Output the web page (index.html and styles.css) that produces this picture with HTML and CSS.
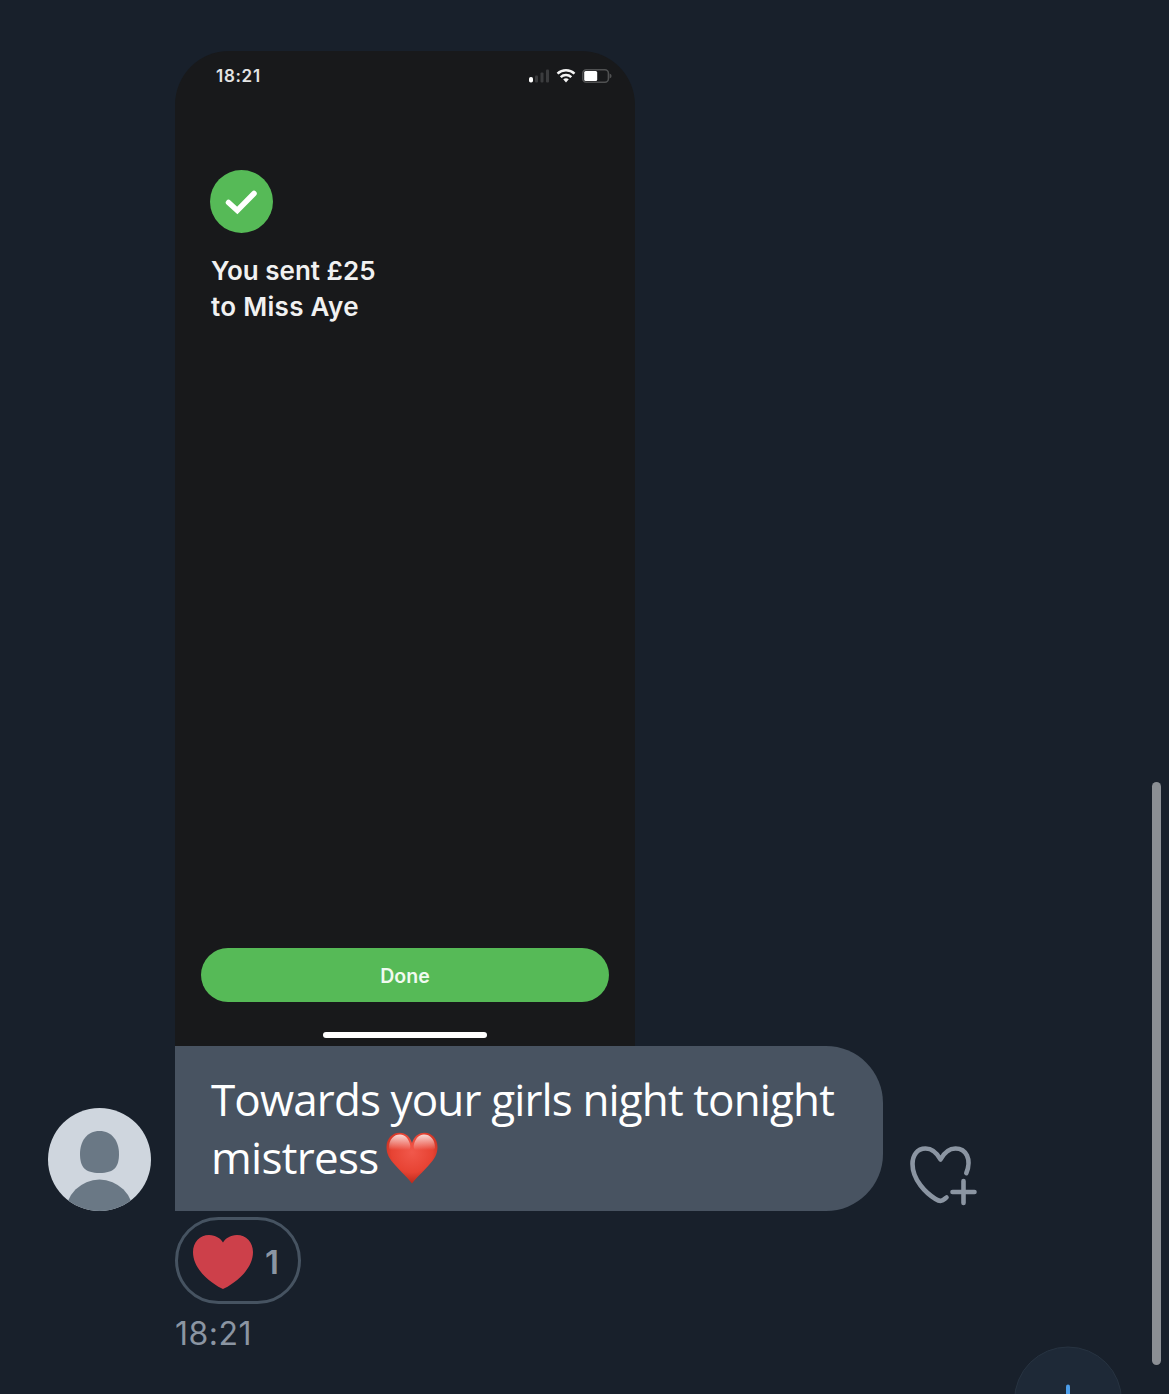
FILE: index.html
```
<!DOCTYPE html>
<html lang="en">
<head>
	<meta charset="utf-8">
	<title>Messages</title>
	<link rel="stylesheet" href="styles.css">
</head>
<body>
	<div class="chat">
		<div class="photo">
			<div class="status">
				<span class="clock">18:21</span>
				<svg class="status-icons" width="84" height="16" viewBox="0 0 84 16">
					<rect x="1" y="9" width="4" height="5.5" rx="1.8" fill="#fff"/>
					<g fill="#3b3c3e">
						<rect x="7" y="7.5" width="3" height="7" rx="1"/>
						<rect x="12.500" y="4.500" width="3" height="10" rx="1"/>
						<rect x="18" y="1.500" width="3" height="13" rx="1"/>
					</g>
					<g fill="none" stroke="#f4f4f4" stroke-width="2.500">
						<path d="M29.500 5.700a12.500 12.500 0 0 1 17 0"/>
						<path d="M32.700 9.200a7.800 7.800 0 0 1 10.600 0"/>
					</g>
					<path d="M35.200 11.300a4.500 4.500 0 0 1 5.600 0L38 14.500z" fill="#f4f4f4"/>
					<rect x="54.800" y="1.800" width="25.600" height="12.400" rx="3.500" fill="none" stroke="#505152" stroke-width="1.500"/>
					<rect x="56.200" y="3" width="13" height="10" rx="1.500" fill="#fff"/>
					<path d="M81.600 5.500q2 .8 2 2.500t-2 2.500z" fill="#505152"/>
				</svg>
			</div>
			<svg class="tick" width="63" height="63" viewBox="0 0 63 63">
				<circle cx="31.500" cy="31.500" r="31.500" fill="#56ba57"/>
				<path d="M18.500 32.500l8.800 8L44 23.500" fill="none" stroke="#fff" stroke-width="5.500" stroke-linecap="round"/>
			</svg>
			<p class="sent">You sent £25<br><span class="name">to Miss Aye</span></p>
			<div class="done">Done</div>
			<div class="home"></div>
		</div>
		<div class="message">
			<svg class="avatar" width="103" height="103" viewBox="0 0 103 103">
				<clipPath id="round"><circle cx="51.500" cy="51.500" r="51.500"/></clipPath>
				<g clip-path="url(#round)">
					<rect width="103" height="103" fill="#cfd6de"/>
					<path d="M51.500 23C64 23 71 33 71 46C71 59 66 65 51.500 65S32 59 32 46C32 33 39 23 51.500 23z" fill="#6a7885"/>
					<ellipse cx="51.500" cy="106" rx="34" ry="34.500" fill="#6a7885"/>
				</g>
			</svg>
			<div class="bubble">
				<span class="line">Towards your girls night tonight</span><br><span class="word">mistress</span><svg class="emoji" width="52" height="52" viewBox="0 0 52 52">
					<defs>
						<radialGradient id="red" cx=".5" cy=".38" r=".62">
							<stop offset="0" stop-color="#f1584b"/>
							<stop offset=".65" stop-color="#e74333"/>
							<stop offset="1" stop-color="#bb291b"/>
						</radialGradient>
						<linearGradient id="shine" x2="0" y2="1">
							<stop offset="0" stop-color="#fff" stop-opacity=".8"/>
							<stop offset="1" stop-color="#fff" stop-opacity="0"/>
						</linearGradient>
					</defs>
					<path d="M26 51.500C22 46 15 40 9 33C3.500 27 .5 22 .5 15C.5 7 6 .8 13.500 .8C20 .8 24 5 26 11C28 5 32 .8 38.500 .8C46 .8 51.500 7 51.500 15C51.500 22 48.500 27 43 33C37 40 30 46 26 51.500z" fill="url(#red)"/>
					<path d="M3 16C3 7 8 2.500 14 2.500C19 2.500 22 6 24 12Q25 16 23 18H4zM49 16C49 7 44 2.500 38 2.500C33 2.500 30 6 28 12Q27 16 29 18H48z" fill="url(#shine)"/>
				</svg>
			</div>
			<svg class="react" width="68" height="60" viewBox="0 0 68 60">
				<g fill="none" stroke="#8b95a2" stroke-width="4.600" stroke-linecap="round" stroke-linejoin="round">
					<path d="M56.300 27.200C62 13 56 2.500 45.500 2.500C38 2.500 34 7 30.500 13.500C27 7 23 2.500 15.500 2.500C7 2.500 2.500 9.500 2.500 18C2.500 34 16 47 25.500 53C31 56.500 32.500 54.500 36.500 51.500"/>
					<path d="M53.500 35v22M42.500 46h22"/>
				</g>
			</svg>
		</div>
		<div class="reaction">
			<svg width="60" height="54" viewBox="0 0 60 54">
				<path d="M30 54C23 51 0 37 0 17C0 7 7 0 16 0C23 0 28 4 30 7.500C32 4 37 0 44 0C53 0 60 7 60 17C60 37 37 51 30 54z" fill="#cd404a"/>
			</svg>
			<span class="count">1</span>
		</div>
		<div class="time">18:21</div>
		<div class="scrollbar"></div>
		<svg class="down" width="108" height="48" viewBox="0 0 108 48">
			<circle cx="54" cy="54.500" r="53.500" fill="#1e2937" stroke="#273341"/>
			<path d="M54 40.500v12" stroke="#4c9eeb" stroke-width="4" stroke-linecap="round"/>
		</svg>
	</div>
</body>
</html>
```
FILE: styles.css
```
*{margin: 0; padding: 0; box-sizing: border-box;}
body{
	background: #18202b;
	font-family: "Open Sans", "Noto Sans", sans-serif;
	color: #fff;
}
svg{
	display: block;
	flex: none;
}
.chat{
	position: relative;
	height: 1394px;
	padding-top: 51px;
	overflow: hidden;
}
.photo{
	display: flex;
	flex-direction: column;
	width: 460px;
	height: 995px;
	margin-left: 175px;
	padding: 16px 26px 8px;
	border-radius: 54px 54px 0 0;
	background: #18191b;
	font-family: Inter, sans-serif;
}
.status{
	display: flex;
	justify-content: space-between;
	align-items: center;
	height: 17px;
	padding-left: 15px;
}
.status-icons{
	margin-right: -3px;
}
.clock{
	padding-top: 1px;
	font-size: 17px;
	font-weight: 600;
	line-height: 17px;
	letter-spacing: .7px;
	color: #e4e4e4;
}
.tick{
	margin: 86px 0 0 9px;
}
.sent{
	margin: 20px 0 0 10px;
	font-size: 26px;
	font-weight: 600;
	line-height: 36px;
	color: #f1f1f1;
}
.name{
	letter-spacing: .3px;
}
.done{
	height: 54px;
	margin-top: auto;
	border-radius: 27px;
	background: #56ba57;
	color: #f0faf0;
	font-size: 19.5px;
	font-weight: 600;
	line-height: 57px;
	text-align: center;
}
.home{
	width: 164px;
	height: 6px;
	margin: 30px auto 0;
	border-radius: 3px;
	background: #fff;
}
.message{
	display: flex;
	align-items: flex-end;
	height: 165px;
	padding-left: 48px;
}
.bubble{
	width: 708px;
	height: 165px;
	margin-left: 24px;
	padding: 24px 0 0 36px;
	border-radius: 0 57px 57px 0;
	background: #485361;
	font-size: 44px;
	line-height: 58px;
	white-space: nowrap;
}
.line{
	letter-spacing: -.87px;
}
.word{
	letter-spacing: -.7px;
}
.emoji{
	display: inline-block;
	margin-left: 7px;
	vertical-align: -10px;
}
.react{
	margin: 0 0 5px 27px;
}
.reaction{
	display: flex;
	align-items: center;
	width: 126px;
	height: 87px;
	margin: 6px 0 0 175px;
	padding: 2px 0 0 15px;
	border: 3px solid #465361;
	border-radius: 44px;
}
.count{
	margin-left: 12px;
	font-family: Inter, sans-serif;
	font-size: 33px;
	font-weight: 600;
	color: #8b95a2;
}
.time{
	margin: 10px 0 0 175px;
	font-family: Inter, sans-serif;
	font-size: 32px;
	line-height: 40px;
	letter-spacing: .5px;
	color: #8b95a2;
}
/* overlays */
.scrollbar{
	position: absolute;
	top: 782px;
	right: 8px;
	width: 9px;
	height: 583px;
	border-radius: 5px;
	background: #8b8f94;
}
.down{
	position: absolute;
	right: 47px;
	bottom: 0;
}
```
